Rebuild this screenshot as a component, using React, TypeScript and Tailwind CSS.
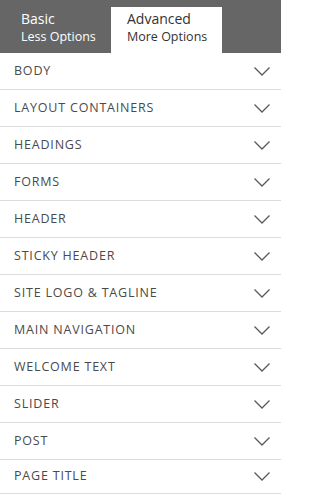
import React from "react";

const items = [
  "BODY",
  "LAYOUT CONTAINERS",
  "HEADINGS",
  "FORMS",
  "HEADER",
  "STICKY HEADER",
  "SITE LOGO & TAGLINE",
  "MAIN NAVIGATION",
  "WELCOME TEXT",
  "SLIDER",
  "POST",
  "PAGE TITLE",
];

function Chevron() {
  return (
    <svg width="16" height="9" viewBox="0 0 16 9" fill="none" className="shrink-0">
      <path d="M0.5 0.5 L8 8 L15.5 0.5" stroke="#5a5a5a" strokeWidth="1.3" />
    </svg>
  );
}

export default function App() {
  return (
    <div
      className="w-[281px] h-[494px] overflow-hidden bg-white"
      style={{ fontFamily: '"Open Sans", "Noto Sans", sans-serif' }}
    >
      <div className="h-[53px] bg-[#666666] flex items-end">
        <div className="w-[111px] h-[46px] pl-[21px] pt-[3px] text-white">
          <div className="text-[14px] leading-[18px]">Basic</div>
          <div className="text-[12.5px] leading-[18px]">Less Options</div>
        </div>
        <div className="w-[111px] h-[46px] bg-white pl-[16px] pt-[3px] text-[#333]">
          <div className="text-[14px] leading-[18px]">Advanced</div>
          <div className="text-[12.5px] leading-[18px]">More Options</div>
        </div>
      </div>
      <div>
        {items.map((t, i) => (
          <div
            key={t}
            className={`flex items-center justify-between pl-[14px] pr-[11px] border-b border-[#dcdcdc] ${
              i === items.length - 1 ? "h-[34px]" : "h-[37px]"
            }`}
          >
            <span className="text-[12.5px] tracking-[0.8px] text-[#4a4a4a]">{t}</span>
            <Chevron />
          </div>
        ))}
      </div>
    </div>
  );
}
